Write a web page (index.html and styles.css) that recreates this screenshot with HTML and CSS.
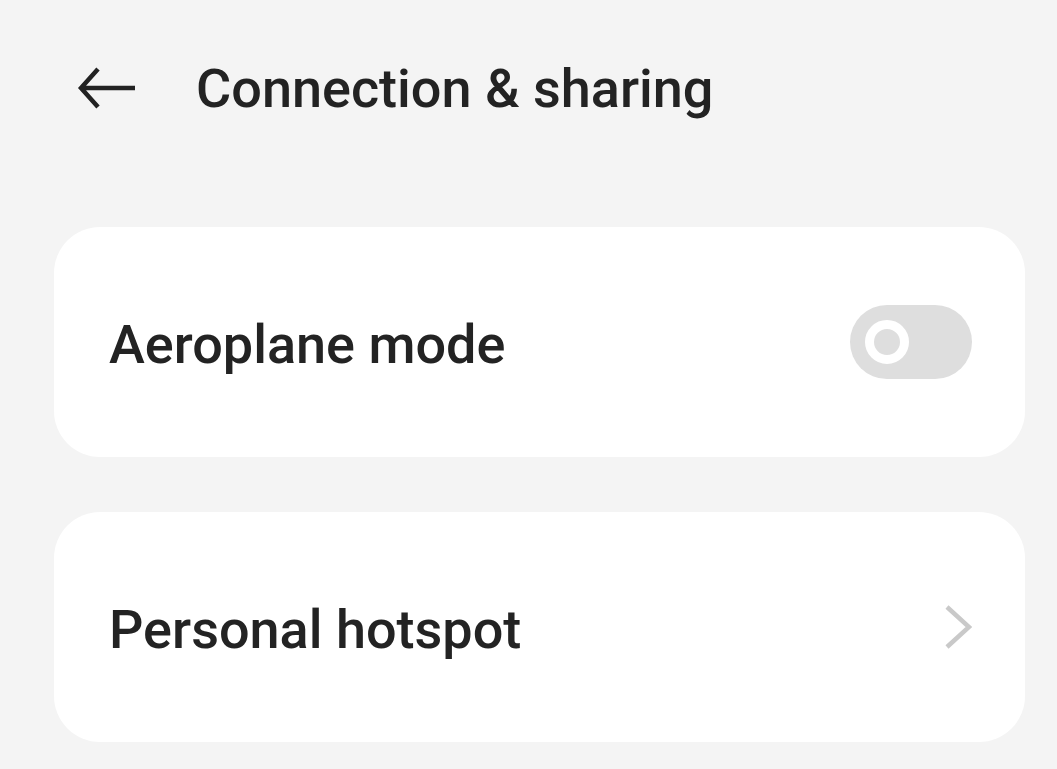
FILE: index.html
```html
<!DOCTYPE html>
<html lang="en">
<head>
  <meta charset="UTF-8">
  <title>Connection &amp; sharing</title>
  <link rel="stylesheet" href="styles.css">
</head>
<body>

  <header class="top-bar">
    <button class="back-btn" aria-label="Back">
      <svg width="60" height="44" viewBox="0 0 60 44">
        <path d="M58 22H4M21 3L4 22l17 19" fill="none" stroke="#222" stroke-width="4.5" stroke-linejoin="miter"/>
      </svg>
    </button>
    <h1>Connection &amp; sharing</h1>
  </header>

  <main class="settings">
    <div class="card">
      <span class="label">Aeroplane mode</span>
      <div class="switch">
        <span class="knob"></span>
      </div>
    </div>

    <div class="card">
      <span class="label">Personal hotspot</span>
      <svg class="chevron" width="28" height="46" viewBox="0 0 28 46">
        <path d="M3 3l22 20L3 43" fill="none" stroke="#c9c9c9" stroke-width="4.5"/>
      </svg>
    </div>
  </main>

</body>
</html>
```

FILE: styles.css
```css
* {
  box-sizing: border-box;
}

body {
  margin: 0;
  background: #f4f4f4;
  font-family: Roboto, 'Noto Sans', sans-serif;
  color: #232323;
  min-height: 100vh;
}

.top-bar {
  display: flex;
  align-items: center;
  height: 176px;
  padding: 0 0 0 77px;
}

.back-btn {
  background: none;
  border: none;
  padding: 0;
  width: 119px;
  display: flex;
  align-items: center;
  cursor: pointer;
}

.top-bar h1 {
  margin: 0;
  font-size: 54px;
  font-weight: 500;
  color: #232323;
}

.settings {
  display: flex;
  flex-direction: column;
  gap: 55px;
  margin: 51px 32px 0 54px;
}

.card {
  background: #fff;
  border-radius: 46px;
  height: 230px;
  display: flex;
  align-items: center;
  justify-content: space-between;
  padding: 4px 53px 0 55px;
}

.label {
  font-size: 54px;
  font-weight: 500;
}

.switch {
  width: 122px;
  height: 74px;
  border-radius: 37px;
  background: #dedede;
  display: flex;
  align-items: center;
  padding-left: 15px;
  margin-top: -4px;
}

.knob {
  width: 44px;
  height: 44px;
  border-radius: 50%;
  border: 9px solid #fff;
  background: #dedede;
}

.chevron {
  margin-top: -4px;
}
```
